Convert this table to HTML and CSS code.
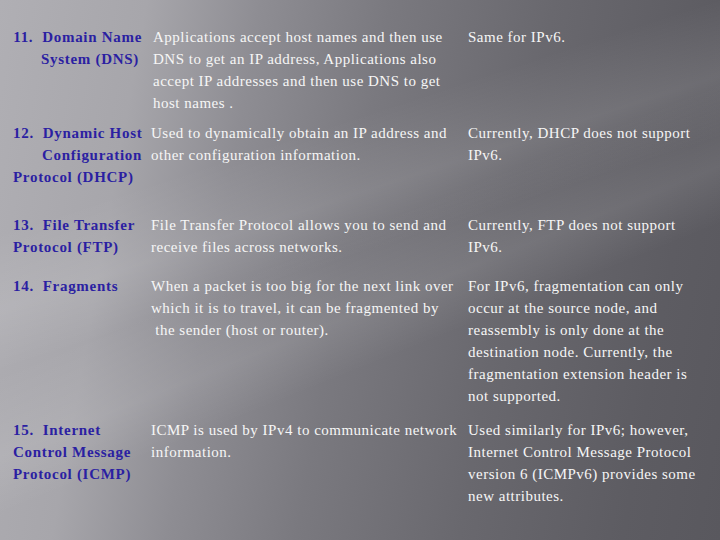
FILE: index.html
```html
<!DOCTYPE html>
<html>
<head>
<meta charset="utf-8">
<link rel="stylesheet" href="styles.css">
</head>
<body>
<div class="slide">
  <div class="row row1">
    <div class="term">
      <span class="line right">11.&nbsp; Domain Name</span>
      <span class="line right pad3">System (DNS)</span>
    </div>
    <div class="desc shift2">Applications accept host names and then use DNS to get an IP address, Applications also accept IP addresses and then use DNS to get host names .</div>
    <div class="v6">Same for IPv6.</div>
  </div>
  <div class="row row2">
    <div class="term">
      <span class="line right">12.&nbsp; Dynamic Host</span>
      <span class="line right">Configuration</span>
      <span class="line">Protocol (DHCP)</span>
    </div>
    <div class="desc">Used to dynamically obtain an IP address and other configuration information.</div>
    <div class="v6">Currently, DHCP does not support IPv6.</div>
  </div>
  <div class="row row3">
    <div class="term">
      <span class="line">13.&nbsp; File Transfer</span>
      <span class="line">Protocol (FTP)</span>
    </div>
    <div class="desc">File Transfer Protocol allows you to send and receive files across networks.</div>
    <div class="v6">Currently, FTP does not support IPv6.</div>
  </div>
  <div class="row row4">
    <div class="term">14.&nbsp; Fragments</div>
    <div class="desc">When a packet is too big for the next link over which it is to travel, it can be fragmented by<br>&nbsp;the sender (host or router).</div>
    <div class="v6">For IPv6, fragmentation can only occur at the source node, and reassembly is only done at the destination node. Currently, the fragmentation extension header is not supported.</div>
  </div>
  <div class="row row5">
    <div class="term">
      <span class="line">15.&nbsp; Internet</span>
      <span class="line">Control Message</span>
      <span class="line">Protocol (ICMP)</span>
    </div>
    <div class="desc">ICMP is used by IPv4 to communicate network information.</div>
    <div class="v6">Used similarly for IPv6; however, Internet Control Message Protocol version 6 (ICMPv6) provides some new attributes.</div>
  </div>
</div>
</body>
</html>
```
FILE: styles.css
```css
html, body {
  margin: 0;
  padding: 0;
}
body {
  width: 720px;
  height: 540px;
  overflow: hidden;
}
.slide {
  width: 720px;
  height: 540px;
  box-sizing: border-box;
  padding: 26px 12px 0 13px;
  font-family: "Liberation Serif", "Times New Roman", serif;
  font-size: 15px;
  line-height: 22px;
  letter-spacing: 0.5px;
  color: #f6f6f6;
  background:
    linear-gradient(162deg, rgba(255,255,255,0) 0%, rgba(255,255,255,0) 30%, rgba(255,255,255,0.10) 40%, rgba(255,255,255,0) 48%),
    linear-gradient(158deg, rgba(255,255,255,0) 45%, rgba(255,255,255,0.09) 55%, rgba(255,255,255,0) 62%),
    linear-gradient(100deg, #b0afb4 0%, #a7a6ab 18%, #8e8d93 32%, #7a797f 48%, #69686e 68%, #5d5c62 88%, #59585e 100%);
}
.row {
  display: grid;
  grid-template-columns: 138px 317px 1fr;
}
.row1 { margin-bottom: 8px; }
.row2 { margin-bottom: 26px; }
.row3 { margin-bottom: 17px; }
.row4 { margin-bottom: 12px; }
.term {
  font-weight: bold;
  color: #2b1fa2;
  padding-right: 9px;
  letter-spacing: 0.7px;
}
.line { display: block; white-space: nowrap; }
.right { text-align: right; }
.pad3 { padding-right: 3px; }
.desc { padding-right: 8px; }
.shift2 { padding-left: 2px; }
```
